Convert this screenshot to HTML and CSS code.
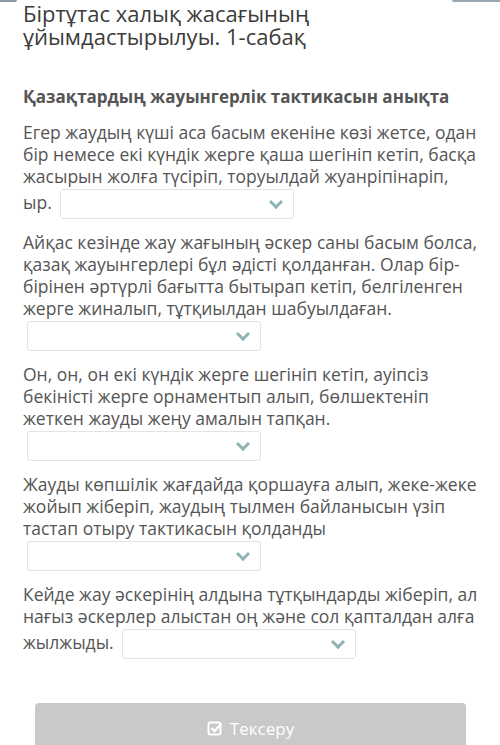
FILE: index.html
```html
<!DOCTYPE html>
<html lang="kk">
<head>
    <meta charset="UTF-8">
    <meta name="viewport" content="width=device-width, initial-scale=1.0">
    <title>Біртұтас халық жасағының ұйымдастырылуы. 1-сабақ</title>
    <link rel="stylesheet" href="styles.css">
</head>
<body>
    <div class="top-strip">
        <span class="strip-left"></span>
        <span class="strip-right"></span>
    </div>

    <div class="lesson">
        <h1 class="lesson-title">Біртұтас халық жасағының ұйымдастырылуы. 1-сабақ</h1>

        <h2 class="task-title">Қазақтардың жауынгерлік тактикасын анықта</h2>

        <p class="item">Егер жаудың күші аса басым екеніне көзі жетсе, одан бір немесе екі күндік жерге қаша шегініп кетіп, басқа жасырын жолға түсіріп, торуылдай жуанріпінаріп, ыр. <span class="select"><span class="chev"></span></span></p>

        <p class="item">Айқас кезінде жау жағының әскер саны басым болса, қазақ жауынгерлері бұл әдісті қолданған. Олар бір-бірінен әртүрлі бағытта бытырап кетіп, белгіленген жерге жиналып, тұтқиылдан шабуылдаған. <span class="select"><span class="chev"></span></span></p>

        <p class="item">Он, он, он екі күндік жерге шегініп кетіп, ауіпсіз бекіністі жерге орнаментып алып, бөлшектеніп жеткен жауды жеңу амалын тапқан. <span class="select"><span class="chev"></span></span></p>

        <p class="item">Жауды көпшілік жағдайда қоршауға алып, жеке-жеке жойып жіберіп, жаудың тылмен байланысын үзіп тастап отыру тактикасын қолданды <span class="select"><span class="chev"></span></span></p>

        <p class="item">Кейде жау әскерінің алдына тұтқындарды жіберіп, ал нағыз әскерлер алыстан оң және сол қапталдан алға жылжыды. <span class="select"><span class="chev"></span></span></p>

        <button class="check-btn" type="button">
            <svg class="check-icon" viewBox="0 0 16 16" width="16" height="16">
                <rect x="1.5" y="2.5" width="12" height="12" rx="2" fill="none" stroke="#fff" stroke-width="2"/>
                <path d="M4.5 8 L7.5 11 L14.5 3.5" fill="none" stroke="#fff" stroke-width="2.4"/>
            </svg>
            Тексеру
        </button>
    </div>
</body>
</html>
```

FILE: styles.css
```css
body {
    margin: 0;
    font-family: 'Open Sans', 'Noto Sans', sans-serif;
    background-color: #fff;
    color: #555;
}

.top-strip {
    display: flex;
    justify-content: space-between;
    height: 2px;
}

.strip-left {
    width: 17px;
    background-color: #8d99a6;
    border-bottom-right-radius: 2px;
}

.strip-right {
    width: 48px;
    background-color: #9aa6b2;
    border-bottom-left-radius: 3px;
}

.lesson {
    padding: 0 20px 0 23px;
}

.lesson-title {
    margin: 0;
    font-size: 22px;
    line-height: 23px;
    font-weight: 400;
    color: #3c3c3c;
    width: 300px;
}

.task-title {
    margin: 37px 0 12px;
    font-size: 17px;
    line-height: 24px;
    font-weight: 700;
    color: #555;
}

.item {
    margin: 0 0 10px;
    font-size: 17.5px;
    line-height: 22px;
}

.select {
    display: inline-block;
    vertical-align: middle;
    position: relative;
    box-sizing: border-box;
    width: 234px;
    height: 30px;
    margin: 2px 0 2px 4px;
    border: 1px solid #e2e5e5;
    border-radius: 3px;
    background-color: #fff;
}

.chev {
    position: absolute;
    right: 12px;
    top: 7px;
    width: 7px;
    height: 7px;
    border-right: 3px solid #8fb3b3;
    border-bottom: 3px solid #8fb3b3;
    transform: rotate(45deg);
}

.check-btn {
    display: flex;
    align-items: center;
    justify-content: center;
    gap: 7px;
    width: 431px;
    height: 50px;
    margin: 42px 0 0 12px;
    border: none;
    border-radius: 4px;
    background-color: #c9c9c9;
    color: #fff;
    font-family: inherit;
    font-size: 17px;
}

.check-icon {
    display: block;
}
```
